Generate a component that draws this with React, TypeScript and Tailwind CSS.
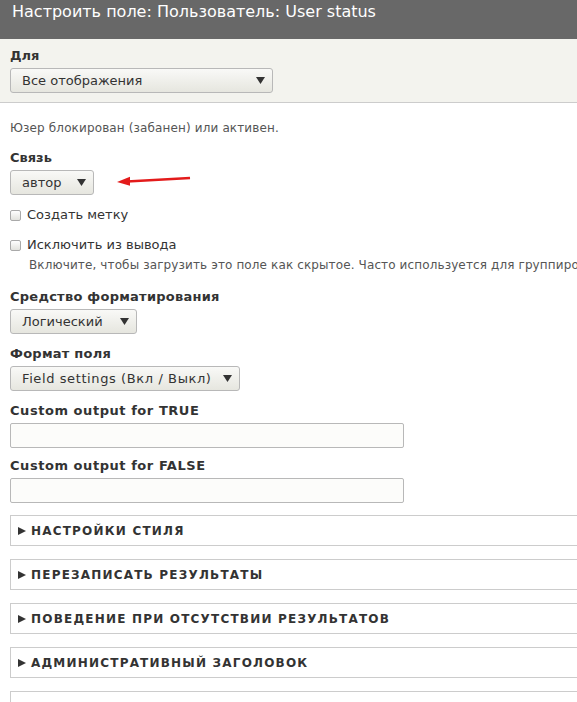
import React from "react";

const FONT = { fontFamily: '"DejaVu Sans", Verdana, sans-serif' };

function Select({
  value,
  width,
  textClass = "",
}: {
  value: string;
  width: string;
  textClass?: string;
}) {
  return (
    <div
      className={`${width} h-[25px] flex items-center justify-between pl-[11px] pr-[7px] rounded-[3px] border border-[#b8b8b8] bg-gradient-to-b from-[#f9f9f7] to-[#e6e6df] text-[13px] text-[#333]`}
    >
      <span className={textClass}>{value}</span>
      <svg width="9" height="7" viewBox="0 0 9 7">
        <polygon points="0,0 9,0 4.5,7" fill="#333" />
      </svg>
    </div>
  );
}

function Label({
  children,
  tracking = "tracking-[0.25px]",
}: {
  children: React.ReactNode;
  tracking?: string;
}) {
  return (
    <div className={`text-[13px] leading-[18px] font-bold text-[#333] mb-[3px] ${tracking}`}>
      {children}
    </div>
  );
}

function Checkbox({ label, className }: { label: string; className: string }) {
  return (
    <div className={`flex items-center h-[18px] ${className}`}>
      <span className="w-[11px] h-[11px] rounded-[2px] border border-[#a9a9a9] bg-gradient-to-b from-[#fefefe] to-[#e2e2dd]" />
      <span className="ml-[6px] text-[13px] text-[#333]">{label}</span>
    </div>
  );
}

function Details({ title, className }: { title?: string; className: string }) {
  return (
    <div
      className={`h-[31px] -mr-[20px] flex items-center pl-[7px] border border-[#cccccc] bg-white ${className}`}
    >
      {title && (
        <>
          <svg width="8" height="8" viewBox="0 0 8 8">
            <polygon points="0,0 8,4 0,8" fill="#333" />
          </svg>
          <span className="ml-[5px] text-[12px] font-bold uppercase tracking-[1.2px] text-[#333]">
            {title}
          </span>
        </>
      )}
    </div>
  );
}

export default function App() {
  return (
    <div className="w-[577px] h-[702px] overflow-hidden bg-white" style={FONT}>
      <div className="h-[39px] bg-[#686868] px-[12px] pt-[2px] text-[16px] leading-[20px] text-white">
        Настроить поле: Пользователь: User status
      </div>

      <div className="h-[64px] bg-[#f3f3ee] border-b border-[#cccccc] px-[10px] pt-[8px]">
        <Label tracking="">Для</Label>
        <Select value="Все отображения" width="w-[263px]" />
      </div>

      <div className="px-[10px]">
        <p className="mt-[17px] text-[12px] leading-[16px] tracking-[0.13px] text-[#555]">
          Юзер блокирован (забанен) или активен.
        </p>

        <div className="mt-[13px] relative">
          <Label tracking="">Связь</Label>
          <Select value="автор" width="w-[84px]" />
          {/* red pointer next to the relationship select */}
          <svg
            className="absolute left-[107px] top-[24px]"
            width="74"
            height="14"
            viewBox="0 0 74 14"
          >
            <line x1="10" y1="8.5" x2="73" y2="5" stroke="#e31b1b" strokeWidth="2.6" />
            <polygon points="0,9 13,3.8 13,12.8" fill="#e31b1b" />
          </svg>
        </div>

        <Checkbox label="Создать метку" className="mt-[11px]" />
        <Checkbox label="Исключить из вывода" className="mt-[12px]" />
        <p className="mt-[3px] ml-[19px] text-[12px] leading-[16px] tracking-[0.12px] text-[#555] whitespace-nowrap">
          Включите, чтобы загрузить это поле как скрытое. Часто используется для группиро
        </p>

        <div className="mt-[15px]">
          <Label>Средство форматирования</Label>
          <Select value="Логический" width="w-[127px]" />
        </div>

        <div className="mt-[11px]">
          <Label>Формат поля</Label>
          <Select
            value="Field settings (Вкл / Выкл)"
            width="w-[230px]"
            textClass="tracking-[0.6px]"
          />
        </div>

        <div className="mt-[11px]">
          <Label tracking="tracking-[0.55px]">Custom output for TRUE</Label>
          <div className="w-[394px] h-[25px] rounded-[2px] border border-[#b8b8b8] bg-[#fcfcfa]" />
        </div>

        <div className="mt-[9px]">
          <Label tracking="tracking-[0.55px]">Custom output for FALSE</Label>
          <div className="w-[394px] h-[25px] rounded-[2px] border border-[#b8b8b8] bg-[#fcfcfa]" />
        </div>

        <Details title="Настройки стиля" className="mt-[12px]" />
        <Details title="Перезаписать результаты" className="mt-[13px]" />
        <Details title="Поведение при отсутствии результатов" className="mt-[13px]" />
        <Details title="Административный заголовок" className="mt-[13px]" />
        <Details className="mt-[13px]" />
      </div>
    </div>
  );
}
